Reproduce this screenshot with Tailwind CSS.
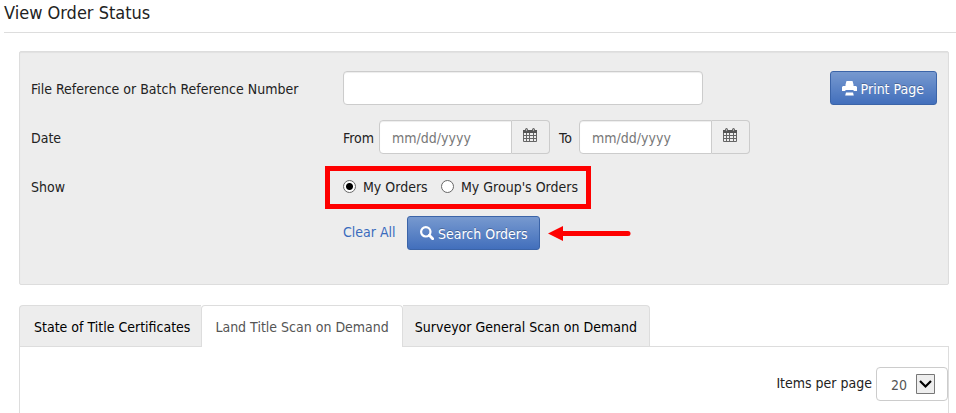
<!DOCTYPE html>
<html lang="en">
<head>
<meta charset="utf-8">
<meta name="viewport" content="width=device-width, initial-scale=1">
<title>View Order Status</title>
<script src="https://cdn.jsdelivr.net/npm/@tailwindcss/browser@4"></script>
</head>
<body class="bg-white pl-1 font-['Tahoma','DejaVu_Sans_Condensed','Noto_Sans',sans-serif] text-[14px] leading-5 text-[#222]">
<svg class="hidden" aria-hidden="true">
  <symbol id="calendar" viewBox="0 0 14 15">
    <path fill="#eee" d="M1 3h12v11H1z"/>
    <path fill="none" stroke="#666" d="M.5 3v10.500h13V3M.5 7.500h13M.5 10.500h13M3.500 5v8M6.500 5v8M10.500 5v8"/>
    <path fill="#555" d="M0 2h14v3H0z"/>
    <rect x="2.500" y=".5" width="2" height="3" rx="1" fill="#aaa" stroke="#555"/>
    <rect x="9.500" y=".5" width="2" height="3" rx="1" fill="#aaa" stroke="#555"/>
  </symbol>
</svg>
<h1 class="border-b border-[#ddd] pt-px pb-[7px] text-[18px] leading-6">View Order Status</h1>
<main class="ml-[15px] mr-[7px] pt-[18px]">
  <form class="rounded-xs border border-[#ddd] bg-[#ededed] pt-[19px] pr-[11px] pb-[34px] pl-[11px] shadow-[inset_0_1px_1px_rgba(0,0,0,0.05)]">
    <div class="grid grid-cols-[312px_1fr_auto] gap-y-[15px]">
      <label for="reference" class="flex h-[34px] items-center pt-[2px]">File Reference or Batch Reference Number</label>
      <input id="reference" type="text" class="h-[34px] w-[360px] rounded border border-[#ccc] bg-white px-3 shadow-[inset_0_1px_1px_rgba(0,0,0,0.075)]">
      <button type="button" class="flex h-[34px] items-center gap-1 rounded-[3px] border border-[#3b64a8] bg-linear-to-b from-[#7799cf] to-[#426fbc] pr-3 pl-[11px] text-white text-shadow-[0_-1px_0_rgba(0,0,0,0.25)]">
        <svg class="size-[15px]" viewBox="0 0 15 15" fill="#fff" aria-hidden="true"><path d="M4.500 0h6l1 3.500v2h-8v-2zM0 6l1-1h13l1 1v4h-3l-.8-1H3.800L3 10H0zM4 11.500h7l.8 3H3.200z"/></svg>
        <span class="pt-[2px]">Print Page</span>
      </button>
      <span class="flex h-[34px] items-center pt-[2px]">Date</span>
      <div class="col-span-2 flex items-center">
        <label for="from" class="w-9 pt-[2px]">From</label>
        <input id="from" type="text" placeholder="mm/dd/yyyy" class="h-[34px] w-[133px] rounded-l border border-[#ccc] bg-white px-3 pt-[2px] shadow-[inset_0_1px_1px_rgba(0,0,0,0.075)] placeholder:text-[#777]">
        <button type="button" aria-label="Choose from date" class="flex h-[34px] w-[38px] rounded-r border border-l-0 border-[#ccc] bg-[#eee] pt-[7px] pl-[11px]"><svg class="h-[15px] w-[14px]"><use href="#calendar"/></svg></button>
        <label for="to" class="ml-[9px] w-5 pt-[2px]">To</label>
        <input id="to" type="text" placeholder="mm/dd/yyyy" class="h-[34px] w-[133px] rounded-l border border-[#ccc] bg-white px-3 pt-[2px] shadow-[inset_0_1px_1px_rgba(0,0,0,0.075)] placeholder:text-[#777]">
        <button type="button" aria-label="Choose to date" class="flex h-[34px] w-[38px] rounded-r border border-l-0 border-[#ccc] bg-[#eee] pt-[7px] pl-[11px]"><svg class="h-[15px] w-[14px]"><use href="#calendar"/></svg></button>
      </div>
      <span id="show-label" class="flex h-[34px] items-center pt-[2px]">Show</span>
      <div class="col-span-2">
        <div role="radiogroup" aria-labelledby="show-label" class="relative flex h-[34px] w-[236px] items-center">
          <input id="mine" type="radio" name="show" checked class="size-[13px] shrink-0 appearance-none rounded-full border border-[#666] bg-white checked:bg-[radial-gradient(circle,#000_3px,#fff_4px)]">
          <label for="mine" class="ml-[7px] w-[78px] shrink-0 pt-[2px] whitespace-nowrap">My Orders</label>
          <input id="group" type="radio" name="show" class="size-[13px] shrink-0 appearance-none rounded-full border border-[#666] bg-white checked:bg-[radial-gradient(circle,#000_3px,#fff_4px)]">
          <label for="group" class="ml-[7px] pt-[2px] whitespace-nowrap">My Group's Orders</label>
          <div class="pointer-events-none absolute -top-[3px] -right-3 -bottom-[6px] -left-[18px] border-5 border-[#fe0000]"></div>
        </div>
      </div>
    </div>
    <div class="mt-[13px] flex pl-[312px]">
      <a href="#" class="mt-[6px] w-16 text-[#3a6bbd]">Clear All</a>
      <button type="submit" class="flex h-[34px] items-center gap-1 rounded-[3px] border border-[#3b64a8] bg-linear-to-b from-[#7799cf] to-[#426fbc] pr-[11px] pl-3 text-white text-shadow-[0_-1px_0_rgba(0,0,0,0.25)]">
        <svg class="size-[14px]" viewBox="0 0 14 14" fill="none" stroke="#fff" aria-hidden="true"><circle cx="5.800" cy="5.800" r="4.700" stroke-width="2.200"/><path d="M9.300 9.300l3.400 3.400" stroke-width="2.800" stroke-linecap="round"/></svg>
        <span class="pt-[2px]">Search Orders</span>
      </button>
      <svg class="mt-[10px] ml-2 h-[15px] w-[83px]" viewBox="0 0 83 15" aria-hidden="true"><path d="M0 7.500L15 0v15z" fill="#fe0000"/><path d="M14 7.500h66" stroke="#fe0000" stroke-width="5" stroke-linecap="round"/></svg>
    </div>
  </form>
  <div role="tablist" class="mt-5 flex border-b border-[#ddd] text-black">
    <button type="button" role="tab" aria-selected="false" class="h-[41px] rounded-tl border-t border-l border-[#ddd] bg-[#ededed] pt-px pr-[11px] pl-[14px]">State of Title Certificates</button>
    <button type="button" role="tab" aria-selected="true" class="-mb-px h-[42px] rounded-t border border-b-0 border-[#ddd] bg-white px-[13px] text-[#555]">Land Title Scan on Demand</button>
    <button type="button" role="tab" aria-selected="false" class="h-[41px] rounded-tr border-t border-r border-[#ddd] bg-[#ededed] px-3 pt-px">Surveyor General Scan on Demand</button>
  </div>
  <section role="tabpanel" class="flex h-[66px] items-start justify-end border-x border-[#ddd] pt-5">
    <label for="items" class="mt-[6px] mr-1">Items per page</label>
    <div class="relative">
      <select id="items" class="h-[34px] w-[72px] appearance-none rounded border border-[#ccc] bg-white pt-[2px] pl-[14px] text-[#555]"><option>20</option><option>50</option></select>
      <svg class="pointer-events-none absolute top-[7px] right-[13px] h-5 w-[19px]" viewBox="0 0 19 20" aria-hidden="true"><path d="M.5.5h18v19H.5z" fill="#eee" stroke="#777"/><path d="M4 7l5.500 5.500L15 7" fill="none" stroke="#000" stroke-width="2.200"/></svg>
    </div>
  </section>
</main>
</body>
</html>
